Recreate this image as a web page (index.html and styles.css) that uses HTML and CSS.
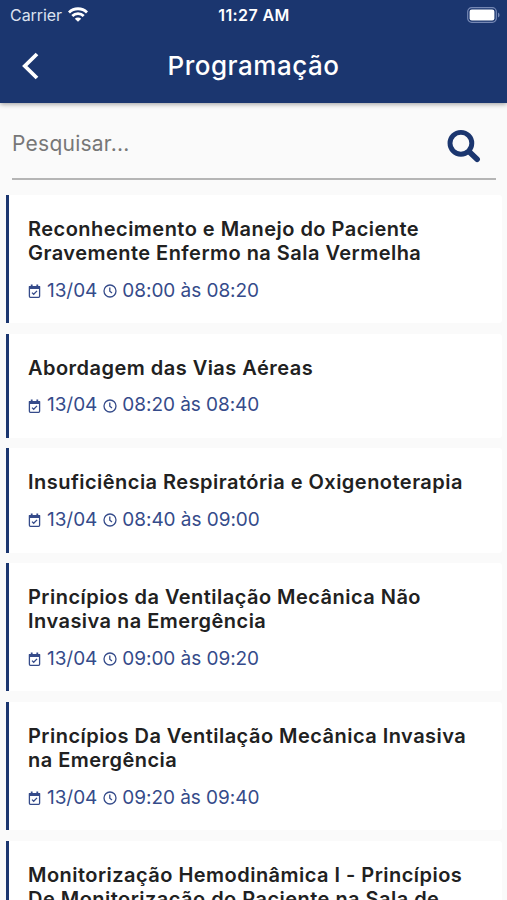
FILE: index.html
```
<!DOCTYPE html>
<html lang="pt-BR">

<head>
  <meta charset="utf-8">
  <title>Programação</title>
  <link rel="stylesheet" href="styles.css">
</head>

<body>
  <!-- icons used in every card -->
  <svg class="sprite">
    <symbol id="calendar" viewBox="0 0 13 14">
      <path d="M1.4 2.6h10.2v9.7q0 1-1 1H2.4q-1 0-1-1z" fill="none" stroke="currentColor" stroke-width="1.3" stroke-linejoin="round"/>
      <path d="M1 2h11v2.9H1zM2.8.4h1.8v2H2.8zM8.4.4h1.8v2H8.4z" fill="currentColor"/>
      <path d="M4 8.6l1.7 1.7 3.3-3.4" fill="none" stroke="currentColor" stroke-width="1.3"/>
    </symbol>
    <symbol id="clock" viewBox="0 0 14 14">
      <circle cx="7" cy="7" r="6" fill="none" stroke="currentColor" stroke-width="1.3"/>
      <path d="M6.8 3.4V7.2l2.2 1.9" fill="none" stroke="currentColor" stroke-width="1.3"/>
    </symbol>
  </svg>

  <header class="header">
    <div class="status">
      <div class="carrier">
        <span>Carrier</span>
        <svg class="wifi" width="20" height="15" viewBox="0 0 20 15" fill="none" stroke="#fff" stroke-width="2.8">
          <path d="M1 5.5a12.7 12.7 0 0 1 18 0"/>
          <path d="M4.3 9a8 8 0 0 1 11.4 0"/>
          <path d="M10 14.8L6.8 11.7a4.6 4.6 0 0 1 6.4 0z" fill="#fff" stroke="none"/>
        </svg>
      </div>
      <span class="time">11:27 AM</span>
      <svg class="battery" width="33" height="16" viewBox="0 0 33 16">
        <rect x=".7" y=".7" width="28.6" height="14.6" rx="4" fill="none" stroke="#7688b4" stroke-width="1.2"/>
        <rect x="2.6" y="2.6" width="24.8" height="10.8" rx="2.2" fill="#fff"/>
        <path d="M31 5.4q1.6.8 1.6 2.6T31 10.6z" fill="#7688b4"/>
      </svg>
    </div>
    <div class="navbar">
      <svg class="back" width="18" height="28" viewBox="0 0 18 28">
        <path d="M15 2L2.8 14 15 26" fill="none" stroke="#fff" stroke-width="3.8"/>
      </svg>
      <h1>Programação</h1>
    </div>
  </header>

  <div class="search">
    <span class="placeholder">Pesquisar...</span>
    <svg class="lupa" width="34" height="34" viewBox="0 0 34 34" fill="none" stroke="#1b366f">
      <circle cx="13.9" cy="14.3" r="10.9" stroke-width="4.9"/>
      <path d="M22.5 22.9l7.6 7.4" stroke-width="5.6" stroke-linecap="round"/>
    </svg>
  </div>

  <main class="list">
    <div class="card">
      <h2>Reconhecimento e Manejo do Paciente<br>Gravemente Enfermo na Sala Vermelha</h2>
      <p class="info"><svg class="calendar"><use href="#calendar"/></svg><span class="date">13/04</span><svg class="clock"><use href="#clock"/></svg><span>08:00 às 08:20</span></p>
    </div>
    <div class="card">
      <h2>Abordagem das Vias Aéreas</h2>
      <p class="info"><svg class="calendar"><use href="#calendar"/></svg><span class="date">13/04</span><svg class="clock"><use href="#clock"/></svg><span>08:20 às 08:40</span></p>
    </div>
    <div class="card">
      <h2>Insuficiência Respiratória e Oxigenoterapia</h2>
      <p class="info"><svg class="calendar"><use href="#calendar"/></svg><span class="date">13/04</span><svg class="clock"><use href="#clock"/></svg><span>08:40 às 09:00</span></p>
    </div>
    <div class="card">
      <h2>Princípios da Ventilação Mecânica Não<br>Invasiva na Emergência</h2>
      <p class="info"><svg class="calendar"><use href="#calendar"/></svg><span class="date">13/04</span><svg class="clock"><use href="#clock"/></svg><span>09:00 às 09:20</span></p>
    </div>
    <div class="card">
      <h2>Princípios Da Ventilação Mecânica Invasiva<br>na Emergência</h2>
      <p class="info"><svg class="calendar"><use href="#calendar"/></svg><span class="date">13/04</span><svg class="clock"><use href="#clock"/></svg><span>09:20 às 09:40</span></p>
    </div>
    <div class="card">
      <h2>Monitorização Hemodinâmica I - Princípios<br>De Monitorização do Paciente na Sala de</h2>
    </div>
  </main>
</body>
</html>
```
FILE: styles.css
```
* {
  box-sizing: border-box;
}
body {
  margin: 0;
  height: 900px;
  overflow: hidden;
  background: #fafafa;
  font-family: Inter, "Liberation Sans", sans-serif;
  color: #212121;
}
h1, h2, p {
  margin: 0;
}
svg {
  display: block;
  flex: none;
}
.sprite {
  position: absolute;
  width: 0;
  height: 0;
}
.header {
  height: 103px;
  background: #1b366f;
  color: #fff;
  box-shadow: 0 1px 5px rgba(0, 0, 0, 0.4);
}
.status {
  display: grid;
  grid-template-columns: 1fr auto 1fr;
  align-items: center;
  height: 29px;
  padding: 0 7px 0 10px;
}
.carrier {
  display: flex;
  align-items: center;
  gap: 6px;
  font-size: 16px;
  letter-spacing: -0.05px;
  color: #dce2f0;
}
.time {
  margin-left: -2px;
  font-size: 16px;
  font-weight: 600;
  letter-spacing: 0.4px;
}
.battery {
  justify-self: end;
}
.navbar {
  display: grid;
  grid-template-columns: 1fr auto 1fr;
  align-items: center;
  height: 74px;
  padding: 0 0 1px 22px;
}
.navbar::after {
  content: "";
  margin-right: 22px;
}
.navbar h1 {
  margin-left: -22px;
  font-size: 26px;
  font-weight: 500;
  letter-spacing: 0.5px;
}
.search {
  display: flex;
  justify-content: space-between;
  height: 77px;
  margin: 0 11px 0 12px;
  padding: 26px 15px 0 0;
  border-bottom: 2px solid #b5b5b5;
}
.placeholder {
  padding-top: 1px;
  font-size: 21px;
  line-height: 28px;
  letter-spacing: 0.25px;
  color: #777;
}
.list {
  display: flex;
  flex-direction: column;
  gap: 10.5px;
  padding: 15px 5px 0 6px;
}
.card {
  flex: none;
  padding: 22px 0 20.2px 19px;
  border-left: 3px solid #1b366f;
  border-radius: 0 3px 3px 0;
  background: #fff;
}
.card h2 {
  font-size: 20px;
  font-weight: 600;
  line-height: 24.3px;
  letter-spacing: 0.47px;
  white-space: nowrap;
}
.info {
  display: flex;
  align-items: center;
  margin-top: 13.1px;
  font-size: 19px;
  line-height: 24.5px;
  letter-spacing: -0.05px;
  color: #354b8a;
}
.calendar {
  width: 13px;
  height: 14px;
  margin-right: 6px;
}
.date {
  margin-right: 6px;
}
.clock {
  width: 14px;
  height: 14px;
  margin-right: 5px;
}
```
